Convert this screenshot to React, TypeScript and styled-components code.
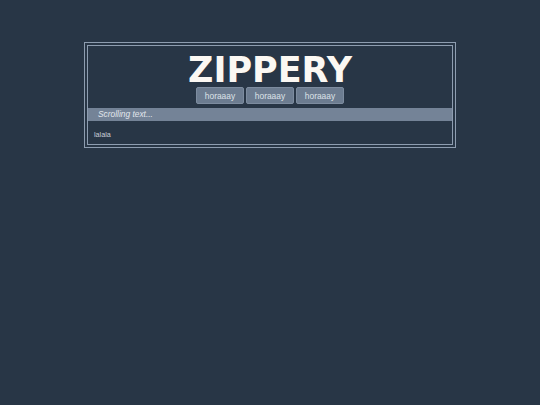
import styled, { createGlobalStyle } from "styled-components";

const BUTTONS = ["horaaay", "horaaay", "horaaay"];

const App: React.FC = () => {
  return (
    <>
      <GlobalStyle />
      <Page>
        <Frame>
          <Title>ZIPPERY</Title>
          <ButtonRow>
            {BUTTONS.map((label, index) => (
              <NavButton key={index}>{label}</NavButton>
            ))}
          </ButtonRow>
          <Ticker>Scrolling text...</Ticker>
          <Content>lalala</Content>
        </Frame>
      </Page>
    </>
  );
};
export default App;

const GlobalStyle = createGlobalStyle`
  html, body {
    margin: 0;
    padding: 0;
    background: #283646;
  }
  body {
    font-family: "Liberation Sans", Arial, sans-serif;
  }
`;

const Page = styled.div`
  width: 540px;
  height: 405px;
  padding-top: 42px;
  box-sizing: border-box;
  display: flex;
  flex-direction: column;
  align-items: center;
`;

const Frame = styled.div`
  width: 372px;
  box-sizing: border-box;
  border: 4px double #8e9db0;
  display: flex;
  flex-direction: column;
`;

const Title = styled.h1`
  margin: 7px 0 0;
  font-family: "DejaVu Sans", Verdana, sans-serif;
  font-size: 35px;
  font-weight: bold;
  line-height: 34px;
  color: #fbf8f3;
  text-align: center;
`;

const ButtonRow = styled.div`
  display: flex;
  justify-content: center;
  gap: 2px;
`;

const NavButton = styled.button`
  width: 48px;
  height: 17px;
  padding: 0;
  border: 1px solid #7d8c9f;
  border-radius: 2px;
  background: #6c7c90;
  color: #dde2e8;
  font-family: "Liberation Sans", Arial, sans-serif;
  font-size: 8.4px;
  cursor: pointer;
`;

const Ticker = styled.div`
  margin-top: 4px;
  height: 13px;
  padding-left: 10px;
  background: #748397;
  color: #e2e6ec;
  font-size: 8.4px;
  font-style: italic;
  line-height: 13px;
`;

const Content = styled.div`
  padding: 9px 6px 5px;
  color: #c9cfd8;
  font-size: 7.2px;
  line-height: 9px;
`;
